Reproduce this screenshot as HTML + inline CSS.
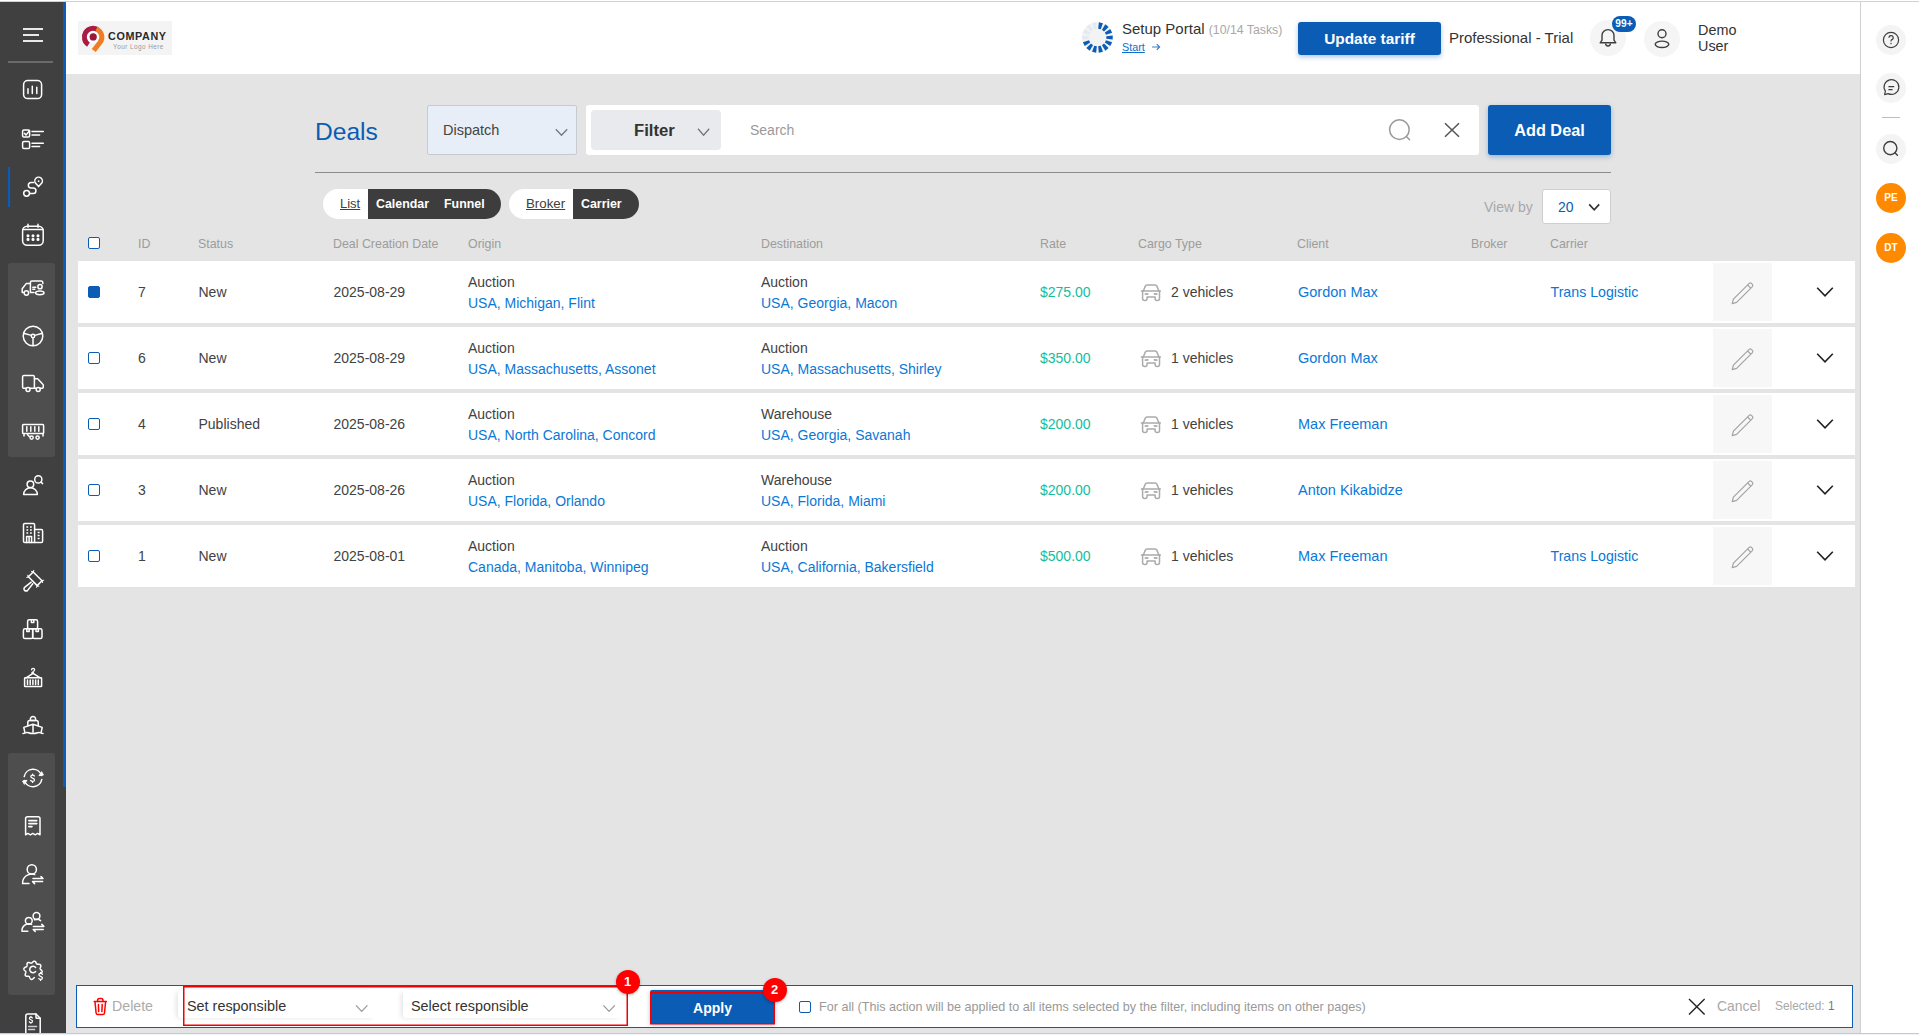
<!DOCTYPE html>
<html><head><meta charset="utf-8">
<style>
*{box-sizing:border-box;margin:0;padding:0}
html,body{width:1919px;height:1035px;overflow:hidden;background:#fff;font-family:"Liberation Sans",sans-serif;color:#333}
.abs{position:absolute}
#topline{left:0;top:1px;width:1919px;height:1px;background:#d2d2d2}
#botline{left:0;top:1033px;width:1919px;height:1px;background:#c9c9c9}
#botline2{left:0;top:1034px;width:1919px;height:1px;background:#f1f4f8}
#side{left:0;top:2px;width:66px;height:1031px;background:#404040;overflow:hidden}
#thumb{left:63px;top:0;width:3px;height:785px;background:#0a5cb8}
.grp{position:absolute;left:8px;width:47px;background:#4e4e4e;border-radius:3px}
.si{position:absolute;left:0;display:block;overflow:visible}
.si *{fill:none;stroke:#fff;stroke-width:1.5;stroke-linecap:round;stroke-linejoin:round}
.si .f{fill:#fff;stroke:none}
#header{left:66px;top:2px;width:1794px;height:72px;background:#fff}
#content{left:66px;top:74px;width:1794px;height:959px;background:#e4e4e4}
#rpanel{left:1860px;top:2px;width:59px;height:1031px;background:#fff;border-left:1px solid #d0d0d0}
.t{position:absolute;white-space:nowrap;line-height:1}
.row{position:absolute;left:12px;width:1777px;height:62px;background:#fff}
.cell{position:absolute;white-space:nowrap;font-size:14px;color:#424242}
.lnk{color:#0a78d7}
.hd{position:absolute;top:163px;font-size:12.4px;color:#9c9c9c;white-space:nowrap;line-height:14px}
.cb{position:absolute;width:12px;height:12px;border:1.5px solid #0b5cb5;border-radius:2px;background:#fff}
.cb.on{background:#0b5cb5}
.rc{position:absolute;width:32px;height:32px;border-radius:50%;background:#f4f4f4}
.rate{color:#14bd9c}
.cl{font-size:14.5px}
.cr{font-size:14.2px}

</style></head>
<body>
<div class="abs" id="side" style="top:0;height:1033px">
<div class="grp" style="top:263px;height:194px"></div>
<div class="grp" style="top:753px;height:242px"></div>
<svg class="si" width="66" height="1033" viewBox="0 0 66 1033">
<!-- hamburger -->
<path d="M23 29H43M23 35H39M23 41H43" style="stroke-width:2.2;stroke-linecap:butt;stroke:#e8e8e8"/>
<path d="M8 62H53" style="stroke:#6a6a6a;stroke-width:2;stroke-linecap:butt"/>
<!-- chart -->
<rect x="23.6" y="80.6" width="18" height="18" rx="4.2"/>
<path d="M28 88.8V93.4M32.3 86.3V93.4M36.8 87.3V93.4"/>
<!-- checklist -->
<rect x="22.6" y="130" width="7" height="7" rx="1.3"/>
<path d="M24.6 133.4L26 135L29.6 130.6"/>
<path d="M32 131.4H43.3M32 134.9H39.6"/>
<rect x="22.6" y="141.5" width="7" height="7" rx="1.3"/>
<path d="M32 143.2H43.3M32 146.4H39.6"/>
<!-- active bar -->
<path d="M9 167V207" style="stroke:#0a5cb8;stroke-width:2.2;stroke-linecap:butt"/>
<!-- route -->
<circle cx="26.6" cy="193.3" r="2.9"/>
<path d="M33.5 182.6H31A2.65 2.65 0 0 0 31 187.9H33.2A2.75 2.75 0 0 1 33.2 193.4H29.7"/>
<path d="M38.6 186.6L35.9 183.6A3.8 3.8 0 1 1 41.3 183.6Z"/>
<circle class="f" cx="38.6" cy="181.2" r="0.9"/>
<!-- calendar -->
<rect x="22.6" y="226.2" width="20.6" height="19" rx="4.5"/>
<path d="M28 224.2V227.2M38 224.2V227.2M22.8 229.6H43"/>
<g class="f"><circle cx="28" cy="235.7" r="0.8"/><circle cx="33" cy="235.7" r="0.8"/><circle cx="38" cy="235.7" r="0.8"/><circle cx="28" cy="239.4" r="0.8"/><circle cx="33" cy="239.4" r="0.8"/><circle cx="38" cy="239.4" r="0.8"/></g>
<!-- truck person -->
<path d="M34 292.4H30.4V282.6A1.5 1.5 0 0 1 31.9 281.1H41.4A1.4 1.4 0 0 1 42.8 282.5V283.6"/>
<path d="M24.2 292.6H22.2V288.8L26.2 283.6H30.4"/>
<path d="M32.8 287.3H35.8M32.8 289.3H34.8"/>
<circle cx="26.4" cy="293" r="2.2"/>
<circle cx="40" cy="286.7" r="2.1"/>
<ellipse cx="39.8" cy="292.8" rx="4.2" ry="1.9"/>
<!-- steering -->
<circle cx="33" cy="336" r="9.8"/>
<circle cx="33" cy="336" r="1.7"/>
<path d="M23.6 333.3L31.3 335.4M42.4 333.3L34.7 335.4M33 337.8V345.6"/>
<!-- truck -->
<path d="M34.4 388.3V376.8A1.3 1.3 0 0 0 33.1 375.6H23.9A1.3 1.3 0 0 0 22.6 376.8V387A1.3 1.3 0 0 0 23.9 388.3H26"/>
<path d="M34.4 378.8H37.2A1.6 1.6 0 0 1 38.4 379.4L42.8 384.2A1.8 1.8 0 0 1 43.3 385.4V387A1.3 1.3 0 0 1 42 388.3H40.3M30 388.3H36"/>
<circle cx="28" cy="389.6" r="2"/>
<circle cx="38.2" cy="389.6" r="2"/>
<!-- trailer -->
<rect x="22.6" y="424.6" width="21" height="9" rx="0.8"/>
<path d="M26.8 426.8V431.3M30.8 426.8V431.3M34.8 426.8V431.3M38.8 426.8V431.3M24 434V436M43 434V436M27.5 434.5L29.3 436.5"/>
<circle cx="31.6" cy="437.6" r="1.6"/>
<circle cx="37.6" cy="437.6" r="1.6"/>
<!-- person search -->
<circle cx="30.4" cy="484.2" r="3.3"/>
<path d="M23.6 494.6H37.4A6.9 6.9 0 0 0 23.6 494.6Z"/>
<circle cx="38.3" cy="479.4" r="3.6"/>
<path d="M40.9 482L42.6 483.6"/>
<!-- building -->
<path d="M34.6 542.6H24.8A1.3 1.3 0 0 1 23.5 541.3V524.8A1.3 1.3 0 0 1 24.8 523.5H33.3A1.3 1.3 0 0 1 34.6 524.8Z"/>
<path d="M34.6 529.6H41.3A1.3 1.3 0 0 1 42.6 530.9V541.3A1.3 1.3 0 0 1 41.3 542.6H34.6"/>
<path d="M26.6 542.6V536.4H31.6V542.6M29.1 536.4V542.6" />
<path d="M26.4 527H28.2M30 527H31.8M26.4 530H28.2M30 530H31.8M26.4 533H28.2M30 533H31.8M37.6 532.6H39.6M37.6 535.6H39.6M37.6 538.6H39.6" style="stroke-width:1.5;stroke-linecap:butt"/>
<!-- gavel -->
<path d="M33.2 572L42 580.8L37.2 585.6L28.4 576.8Z"/><path d="M31.6 571.4L33.2 572L33.8 570.4M26.8 577.4L28.4 576.8L27.8 575.2M43.6 580.2L42 580.8L42.6 582.4M36.6 587.2L37.2 585.6L38.8 586.2" style="stroke-width:1.1"/>
<path d="M31.2 582.2L24.6 587.4A2.1 2.1 0 0 0 27.6 590.4L32.8 583.8"/>
<!-- boxes -->
<rect x="27.6" y="619.8" width="10" height="9" rx="1.6"/>
<rect x="23.4" y="628.8" width="9.4" height="9.8" rx="1.6"/>
<rect x="32.6" y="628.8" width="9.4" height="9.8" rx="1.6"/>
<path d="M31.4 619.8V622.6H33.8V619.8M26.8 628.8V631.4H29.2V628.8M36 628.8V631.4H38.4V628.8"/>
<!-- container crane -->
<rect x="24.6" y="677.8" width="17" height="8.8" rx="0.6"/>
<path d="M27.5 680V684.4M30.2 680V684.4M32.9 680V684.4M35.6 680V684.4M38.3 680V684.4"/>
<path d="M26 677.8L33.1 673.4L40.2 677.8M33.1 673.4V672.4"/>
<path d="M31.6 669.8A1.5 1.5 0 1 1 33.1 671.3V672.4A1.4 1.4 0 0 1 31.7 673" style="stroke-width:1.3"/>
<!-- ship -->
<path d="M33 716.4A2.6 2.6 0 0 1 35.6 719V720.4H30.4V719A2.6 2.6 0 0 1 33 716.4Z"/>
<path d="M27.8 725.6V722.4A2 2 0 0 1 29.8 720.4H36.2A2 2 0 0 1 38.2 722.4V725.6"/>
<path d="M24.8 732.2L23.8 727.4L33 724.2L42.2 727.4L41.2 732.2M33 724.2V732.2"/>
<path d="M23 733.6C25 733.6 25.5 732.4 27 732.4C28.5 732.4 29 733.6 33 733.6C37 733.6 37.5 732.4 39 732.4C40.5 732.4 41 733.6 43 733.6"/>
<!-- dollar cycle -->
<path d="M24.2 776.6A9 9 0 0 1 41.6 775.6M41.8 779.4A9 9 0 0 1 24.4 780.4"/>
<path class="f" d="M39.4 775.6L43.4 775L41.8 772Z M26.6 780.4L22.6 781L24.2 784Z" style="stroke:#fff;stroke-width:1"/>
<path d="M34.40 776.00C34.10 775.40 33.40 775.10 32.60 775.10C31.50 775.10 30.80 775.70 30.80 776.50C30.80 777.40 31.60 777.80 32.60 778.10C33.70 778.40 34.50 778.90 34.50 779.90C34.50 780.80 33.70 781.40 32.60 781.40C31.70 781.40 31.00 781.00 30.70 780.40M32.60 774.10L32.60 775.10M32.60 781.40L32.60 782.40" style="stroke-width:1.3"/>
<!-- receipt -->
<path d="M25.6 834.8V818.8A2 2 0 0 1 27.6 816.8H38A2 2 0 0 1 40 818.8V834.8L37.6 833.4L35.2 834.8L32.8 833.4L30.4 834.8L28 833.4Z"/>
<path d="M28.8 820.6H36.8M28.8 823.6H36.8M28.8 826.6H32" style="stroke-width:1.6"/>
<!-- person transfer -->
<circle cx="31.8" cy="869.4" r="4.6"/>
<path d="M34.8 874.6A9 9 0 0 0 22.6 883.6H29"/>
<path d="M33 878.6H43L41 876.6M42.6 881.6H32.6L34.6 883.6"/>
<!-- group transfer -->
<circle cx="36.5" cy="916" r="3.4"/>
<circle cx="28.8" cy="920.8" r="3.4"/>
<path d="M31.6 924.4A6.8 6.8 0 0 0 22 931.2H27.8M34.5 919.8A6.6 6.6 0 0 1 40.6 920.6"/>
<path d="M33.4 926.4H43.8L41.8 924.4M43.2 929.4H33.2L35.2 931.4"/>
<!-- gear dollar -->
<path d="M34.29 977.59 L34.09 977.72 L33.89 977.89 L33.69 978.08 L33.48 978.30 L33.26 978.52 L33.02 978.74 L32.78 978.95 L32.52 979.13 L32.25 979.28 L31.98 979.38 L31.71 979.42 L31.45 979.42 L31.19 979.36 L30.95 979.24 L30.72 979.07 L30.51 978.86 L30.32 978.61 L30.15 978.34 L30.00 978.06 L29.86 977.77 L29.74 977.49 L29.61 977.23 L29.49 976.99 L29.35 976.79 L29.21 976.62 L29.04 976.49 L28.85 976.40 L28.63 976.34 L28.39 976.31 L28.12 976.30 L27.82 976.30 L27.51 976.30 L27.19 976.29 L26.87 976.27 L26.56 976.23 L26.26 976.16 L25.98 976.06 L25.74 975.92 L25.53 975.74 L25.37 975.53 L25.26 975.29 L25.20 975.02 L25.18 974.73 L25.21 974.43 L25.26 974.11 L25.35 973.80 L25.45 973.50 L25.56 973.21 L25.67 972.93 L25.75 972.66 L25.82 972.42 L25.85 972.19 L25.84 971.97 L25.79 971.77 L25.70 971.57 L25.56 971.37 L25.39 971.18 L25.20 970.97 L24.98 970.76 L24.76 970.54 L24.54 970.30 L24.33 970.06 L24.16 969.80 L24.01 969.53 L23.92 969.26 L23.87 968.99 L23.89 968.72 L23.95 968.47 L24.07 968.23 L24.25 968.00 L24.46 967.79 L24.71 967.61 L24.98 967.44 L25.27 967.29 L25.56 967.15 L25.84 967.03 L26.10 966.90 L26.33 966.78 L26.53 966.64 L26.69 966.49 L26.82 966.32 L26.91 966.13 L26.96 965.91 L26.99 965.66 L27.01 965.39 L27.00 965.10 L27.00 964.79 L27.01 964.47 L27.03 964.15 L27.07 963.83 L27.15 963.53 L27.25 963.26 L27.40 963.02 L27.58 962.82 L27.79 962.66 L28.03 962.56 L28.31 962.50 L28.60 962.48 L28.90 962.51 L29.21 962.57 L29.52 962.66 L29.83 962.76 L30.12 962.87 L30.40 962.97 L30.66 963.06 L30.90 963.12 L31.13 963.15 L31.35 963.14 L31.55 963.08 L31.75 962.99 L31.94 962.85 L32.14 962.68 L32.34 962.48 L32.56 962.26 L32.78 962.04 L33.02 961.82 L33.27 961.62 L33.52 961.44 L33.79 961.30 L34.06 961.21 L34.33 961.17 L34.60 961.19 L34.85 961.26 L35.09 961.39 L35.32 961.56 L35.52 961.78 L35.71 962.03 L35.87 962.31 L36.02 962.59 L36.16 962.88 L36.28 963.16 L36.41 963.42 L36.53 963.65 L36.67 963.84 L36.82 964.00 L36.99 964.13 L37.19 964.21 L37.41 964.27 L37.66 964.30 L37.93 964.31 L38.23 964.30 L38.54 964.30 L38.86 964.31 L39.18 964.33 L39.50 964.38 L39.79 964.45 L40.06 964.56 L40.30 964.71 L40.50 964.89 L40.65 965.11 L40.75 965.36 L40.81 965.63 L40.82 965.92 L40.79 966.23 L40.72 966.54 L40.63 966.85 L40.53 967.15 L40.42 967.44 L40.32 967.72 L40.23 967.98 L40.18 968.22 L40.15 968.45 L40.17 968.66 L40.22 968.87 L40.32 969.06 L40.46 969.26 L40.64 969.46 L40.84 969.66 L41.06 969.87 L41.28 970.10 L41.50 970.34 L41.70 970.59 L41.87 970.85 L42.01 971.11 L42.09 971.39 L42.13 971.66 L42.11 971.92 L42.03 972.17 L41.90 972.41 L41.72 972.64"/>
<path d="M35.6 967.4A3.3 3.3 0 1 0 35.6 971.6"/>
<path d="M42.31 974.31C42.02 973.74 41.36 973.45 40.60 973.45C39.55 973.45 38.89 974.02 38.89 974.78C38.89 975.64 39.65 976.02 40.60 976.30C41.65 976.59 42.41 977.06 42.41 978.01C42.41 978.87 41.65 979.44 40.60 979.44C39.75 979.44 39.08 979.06 38.80 978.49M40.60 972.50L40.60 973.45M40.60 979.44L40.60 980.39" style="stroke-width:1.3"/>
<!-- invoice -->
<path d="M25.8 1034V1016A2 2 0 0 1 27.8 1014H36L40.2 1018.2V1034"/>
<path d="M36 1014V1017.4A0.8 0.8 0 0 0 36.8 1018.2H40.2"/>
<path d="M32.43 1017.93C32.17 1017.42 31.58 1017.16 30.90 1017.16C29.96 1017.16 29.37 1017.67 29.37 1018.35C29.37 1019.12 30.05 1019.46 30.90 1019.71C31.83 1019.97 32.52 1020.39 32.52 1021.25C32.52 1022.01 31.83 1022.52 30.90 1022.52C30.13 1022.52 29.54 1022.18 29.29 1021.67M30.90 1016.31L30.90 1017.16M30.90 1022.52L30.90 1023.37" style="stroke-width:1.2"/>
<path d="M28.6 1026.4H36.6M28.6 1029.4H34.6" style="stroke:#ccc"/>
</svg>
<div style="position:absolute;left:63px;top:2px;width:3px;height:785px;background:#0a5cb8"></div>
</div>

<div class="abs" id="header"></div>
<!-- logo -->
<div class="abs" style="left:78px;top:21px;width:94px;height:34px;background:#f4f4f4"></div>
<svg class="abs" style="left:78px;top:21px" width="94" height="34" viewBox="78 21 94 34">
<circle cx="93.2" cy="36.9" r="6.3" fill="#fff"/>
<path d="M88.46 44.52A8.75 8.75 0 0 1 97.47 29.52" fill="none" stroke="#a91b43" stroke-width="5"/>
<path d="M96.38 28.99A8.75 8.75 0 0 1 100.00 42.49L93.72 50.52" fill="none" stroke="#f07d22" stroke-width="5"/>
<circle cx="93.2" cy="36.9" r="3.6" fill="#9a1838"/>
<text x="108" y="39.8" style="font:bold 10.8px 'Liberation Sans';fill:#2a2a2a;letter-spacing:0.6px">COMPANY</text>
<text x="113" y="48.6" style="font:6.4px 'Liberation Sans';fill:#9a9a9a;letter-spacing:0.45px">Your Logo Here</text>
</svg>
<!-- spinner -->
<svg class="abs" style="left:1081px;top:21px" width="33" height="33" viewBox="-16.5 -16.5 33 33">
<circle r="15.6" fill="#f3f3f3"/>
<g id="ticks"><path d="M3.23 -8.29 L5.43 -14.35 L1.34 -15.29 L0.69 -8.87Z" fill="#0b5cb5"/><path d="M6.50 -6.07 L11.12 -10.57 L7.84 -13.19 L4.47 -7.69Z" fill="#0b5cb5"/><path d="M8.49 -2.65 L14.61 -4.70 L12.78 -8.49 L7.36 -4.99Z" fill="#0b5cb5"/><path d="M8.80 1.30 L15.20 2.10 L15.20 -2.10 L8.80 -1.30Z" fill="#0b5cb5"/><path d="M7.36 4.99 L12.78 8.49 L14.61 4.70 L8.49 2.65Z" fill="#0b5cb5"/><path d="M4.47 7.69 L7.83 13.19 L11.12 10.57 L6.50 6.07Z" fill="#0b5cb5"/><path d="M0.69 8.87 L1.33 15.29 L5.43 14.35 L3.23 8.29Z" fill="#0b5cb5"/><path d="M-3.23 8.29 L-5.43 14.35 L-1.34 15.29 L-0.69 8.87Z" fill="#0b5cb5"/><path d="M-6.50 6.07 L-11.12 10.57 L-7.84 13.19 L-4.47 7.69Z" fill="#0b5cb5"/><path d="M-8.49 2.65 L-14.61 4.70 L-12.78 8.49 L-7.36 4.99Z" fill="#0b5cb5"/><path d="M-8.80 -1.30 L-15.20 -2.10 L-15.20 2.10 L-8.80 1.30Z" fill="#e3eaf2"/><path d="M-7.36 -4.99 L-12.78 -8.49 L-14.61 -4.70 L-8.49 -2.65Z" fill="#e3eaf2"/><path d="M-4.47 -7.69 L-7.84 -13.19 L-11.12 -10.57 L-6.50 -6.07Z" fill="#e3eaf2"/><path d="M-0.69 -8.87 L-1.34 -15.29 L-5.43 -14.35 L-3.23 -8.29Z" fill="#e3eaf2"/></g>
</svg>
<div class="t" style="left:1122px;top:20px;font-size:15px;line-height:17px;color:#333">Setup Portal <span style="font-size:12.3px;color:#a8a8a8">(10/14 Tasks)</span></div>
<div class="t" style="left:1122px;top:41px;font-size:10.8px;line-height:12px;color:#0a6fcf;text-decoration:underline">Start</div>
<svg class="abs" style="left:1150px;top:42px" width="12" height="10" viewBox="0 0 12 10"><path d="M2 5H9.6M6.8 2.2L9.6 5L6.8 7.8" fill="none" stroke="#3a7fd0" stroke-width="1.2"/></svg>
<!-- update tariff -->
<div class="abs" style="left:1298px;top:22px;width:143px;height:33px;background:#0b5cb5;border-radius:3px;box-shadow:0 2px 5px rgba(11,92,181,0.35)"></div>
<div class="t" style="left:1298px;top:22px;width:143px;height:33px;line-height:33px;text-align:center;color:#fff;font-weight:bold;font-size:15.4px">Update tariff</div>
<div class="t" style="left:1449px;top:29px;font-size:15px;line-height:17px;color:#333">Professional - Trial</div>
<!-- bell -->
<div class="abs" style="left:1590px;top:20px;width:36px;height:36px;border-radius:50%;background:#f5f5f5"></div>
<svg class="abs" style="left:1590px;top:20px" width="36" height="36" viewBox="1590 20 36 36">
<path d="M1600.2 42.8H1615.8L1614 40.2V35.6A6 6 0 0 0 1602 35.6V40.2Z" fill="none" stroke="#3f3f3f" stroke-width="1.4" stroke-linejoin="round"/>
<path d="M1605.6 43.6A2.4 2.4 0 0 0 1610.4 43.6" fill="none" stroke="#3f3f3f" stroke-width="1.4"/>
</svg>
<div class="t" style="left:1612px;top:16px;width:24px;height:16px;border-radius:8px;background:#0b5cb5;color:#fff;font-weight:bold;font-size:10.2px;line-height:16px;text-align:center">99+</div>
<!-- user -->
<div class="abs" style="left:1644px;top:21px;width:36px;height:36px;border-radius:50%;background:#f5f5f5"></div>
<svg class="abs" style="left:1644px;top:21px" width="36" height="36" viewBox="1644 21 36 36">
<circle cx="1662" cy="33.8" r="4" fill="none" stroke="#3f3f3f" stroke-width="1.4"/>
<ellipse cx="1662" cy="44.3" rx="6.8" ry="3.2" fill="none" stroke="#3f3f3f" stroke-width="1.4"/>
</svg>
<div class="t" style="left:1698px;top:22px;font-size:14.4px;line-height:16.4px;color:#333">Demo<br>User</div>

<div class="abs" id="content"></div>
<div class="t" style="left:315px;top:118.5px;font-size:24.6px;line-height:26px;color:#0b5cb5">Deals</div>
<!-- dispatch -->
<div class="abs" style="left:427px;top:105px;width:150px;height:50px;background:#e8eef8;border:1px solid #c6cad1;border-radius:2px"></div>
<div class="t" style="left:443px;top:122px;font-size:14.5px;line-height:17px;color:#444">Dispatch</div>
<svg class="abs" style="left:550px;top:120px" width="24" height="20" viewBox="550 120 24 20"><path d="M555.8 129.2L561.5 135.2L567.2 129.2" fill="none" stroke="#777" stroke-width="1.3"/></svg>
<!-- filter/search -->
<div class="abs" style="left:586px;top:105px;width:893px;height:50px;background:#fff;border-radius:3px"></div>
<div class="abs" style="left:591px;top:110px;width:130px;height:40px;background:#e8eaed;border-radius:4px"></div>
<div class="t" style="left:634px;top:121px;font-size:16.7px;line-height:19px;font-weight:bold;color:#333">Filter</div>
<svg class="abs" style="left:690px;top:120px" width="24" height="20" viewBox="690 120 24 20"><path d="M698 128.8L703.6 135.2L709.2 128.8" fill="none" stroke="#777" stroke-width="1.3"/></svg>
<div class="t" style="left:750px;top:122px;font-size:14px;line-height:17px;color:#9a9a9a">Search</div>
<svg class="abs" style="left:1380px;top:110px" width="90" height="40" viewBox="1380 110 90 40">
<circle cx="1399.4" cy="129.6" r="9.8" fill="none" stroke="#999" stroke-width="1.5"/>
<path d="M1406.6 136.8L1409.6 139.8" stroke="#999" stroke-width="1.5" stroke-linecap="round"/>
<path d="M1445 123.2L1459 136.8M1459 123.2L1445 136.8" stroke="#555" stroke-width="1.5"/>
</svg>
<!-- add deal -->
<div class="abs" style="left:1488px;top:105px;width:123px;height:50px;background:#0b5cb5;border-radius:3px;box-shadow:0 2px 5px rgba(11,92,181,0.35)"></div>
<div class="t" style="left:1488px;top:105px;width:123px;height:50px;line-height:50px;text-align:center;color:#fff;font-weight:bold;font-size:16.3px">Add Deal</div>
<!-- divider -->
<div class="abs" style="left:315px;top:172px;width:1296px;height:1px;background:#8c8c8c"></div>
<!-- pills -->
<div class="abs" style="left:323px;top:189px;width:178px;height:30px;border-radius:15px;background:#fff"></div><div class="abs" style="left:368px;top:189px;width:133px;height:30px;border-radius:0 15px 15px 0;background:#3d3d3d"></div>
<div class="t" style="left:340px;top:196px;font-size:13px;line-height:15px;color:#404040;text-decoration:underline">List</div>
<div class="t" style="left:376px;top:197px;font-size:12.4px;line-height:15px;color:#fff;font-weight:bold">Calendar</div>
<div class="t" style="left:444px;top:197px;font-size:12.4px;line-height:15px;color:#fff;font-weight:bold">Funnel</div>
<div class="abs" style="left:509px;top:189px;width:130px;height:30px;border-radius:15px;background:#fff"></div><div class="abs" style="left:573px;top:189px;width:66px;height:30px;border-radius:0 15px 15px 0;background:#3d3d3d"></div>
<div class="t" style="left:526px;top:196px;font-size:13.3px;line-height:15px;color:#404040;text-decoration:underline">Broker</div>
<div class="t" style="left:581px;top:197px;font-size:12.4px;line-height:15px;color:#fff;font-weight:bold">Carrier</div>
<!-- view by -->
<div class="t" style="left:1484px;top:199px;font-size:14px;line-height:16px;color:#a8a8a8">View by</div>
<div class="abs" style="left:1542px;top:189px;width:69px;height:35px;background:#fff;border:1px solid #cfcfcf;border-radius:3px"></div>
<div class="t" style="left:1558px;top:199px;font-size:14px;line-height:16px;color:#0b5cb5">20</div>
<svg class="abs" style="left:1582px;top:198px" width="24" height="20" viewBox="1582 198 24 20"><path d="M1589.2 204.4L1594.2 209.8L1599.2 204.4" fill="none" stroke="#333" stroke-width="1.7"/></svg>
<!-- table header -->
<div class="cb" style="left:88px;top:237px"></div>
<div class="hd" style="left:138px;top:237px">ID</div>
<div class="hd" style="left:198px;top:237px">Status</div>
<div class="hd" style="left:333px;top:237px">Deal Creation Date</div>
<div class="hd" style="left:468px;top:237px">Origin</div>
<div class="hd" style="left:761px;top:237px">Destination</div>
<div class="hd" style="left:1040px;top:237px">Rate</div>
<div class="hd" style="left:1138px;top:237px">Cargo Type</div>
<div class="hd" style="left:1297px;top:237px">Client</div>
<div class="hd" style="left:1471px;top:237px">Broker</div>
<div class="hd" style="left:1550px;top:237px">Carrier</div>
<div class="abs" style="left:78px;top:261px;width:1777px;height:62px;background:#fff"></div>
<div class="cb on" style="left:88px;top:286px"></div>
<div class="cell" style="left:138px;top:284px">7</div>
<div class="cell" style="left:198.5px;top:284px">New</div>
<div class="cell" style="left:333.5px;top:284px">2025-08-29</div>
<div class="cell rate" style="left:1040px;top:284px">$275.00</div>
<div class="cell" style="left:1171px;top:284px">2 vehicles</div>
<div class="cell lnk cl" style="left:1298px;top:284px">Gordon Max</div>
<div class="cell lnk cr" style="left:1550.5px;top:284px">Trans Logistic</div>
<div class="cell" style="left:468px;top:274px">Auction</div>
<div class="cell lnk" style="left:468px;top:295px">USA, Michigan, Flint</div>
<div class="cell" style="left:761px;top:274px">Auction</div>
<div class="cell lnk" style="left:761px;top:295px">USA, Georgia, Macon</div>
<svg class="abs" style="left:1140px;top:283px" width="22" height="20" viewBox="0 0 22 20"><g fill="none" stroke="#ababab" stroke-width="1.5" stroke-linejoin="round" stroke-linecap="round"><path d="M3.3 8L5.3 3.1A1.8 1.8 0 0 1 7 2H15.2A1.8 1.8 0 0 1 16.9 3.1L18.9 8"/><path d="M1.4 8H20.4"/><path d="M2.6 8V15.6A2 2 0 0 0 4.6 17.6H5.1A2 2 0 0 0 7.1 15.6V13.9H15.1V15.6A2 2 0 0 0 17.1 17.6H17.5A2 2 0 0 0 19.5 15.6V8"/><path d="M5.4 11.2L7.8 10.8M14.4 10.8L16.8 11.2" stroke-width="1.7"/></g></svg>
<div class="abs" style="left:1713px;top:263px;width:59px;height:58px;background:#f7f7f7"></div>
<svg class="abs" style="left:1728px;top:279px" width="28" height="26" viewBox="0 0 28 26"><g fill="none" stroke="#a3a3a3" stroke-width="1.2" stroke-linejoin="round"><path d="M4.2 24.6L5.4 20.2L21.2 4.4A1.6 1.6 0 0 1 23.4 4.4L24.4 5.4A1.6 1.6 0 0 1 24.4 7.6L8.6 23.4Z"/><path d="M19.6 6L22.8 9.2"/></g></svg>
<svg class="abs" style="left:1812px;top:283px" width="26" height="18" viewBox="0 0 26 18"><path d="M5.2 4.8L13 12.8L20.8 4.8" fill="none" stroke="#222" stroke-width="1.6"/></svg>
<div class="abs" style="left:78px;top:327px;width:1777px;height:62px;background:#fff"></div>
<div class="cb" style="left:88px;top:352px"></div>
<div class="cell" style="left:138px;top:350px">6</div>
<div class="cell" style="left:198.5px;top:350px">New</div>
<div class="cell" style="left:333.5px;top:350px">2025-08-29</div>
<div class="cell rate" style="left:1040px;top:350px">$350.00</div>
<div class="cell" style="left:1171px;top:350px">1 vehicles</div>
<div class="cell lnk cl" style="left:1298px;top:350px">Gordon Max</div>
<div class="cell" style="left:468px;top:340px">Auction</div>
<div class="cell lnk" style="left:468px;top:361px">USA, Massachusetts, Assonet</div>
<div class="cell" style="left:761px;top:340px">Auction</div>
<div class="cell lnk" style="left:761px;top:361px">USA, Massachusetts, Shirley</div>
<svg class="abs" style="left:1140px;top:349px" width="22" height="20" viewBox="0 0 22 20"><g fill="none" stroke="#ababab" stroke-width="1.5" stroke-linejoin="round" stroke-linecap="round"><path d="M3.3 8L5.3 3.1A1.8 1.8 0 0 1 7 2H15.2A1.8 1.8 0 0 1 16.9 3.1L18.9 8"/><path d="M1.4 8H20.4"/><path d="M2.6 8V15.6A2 2 0 0 0 4.6 17.6H5.1A2 2 0 0 0 7.1 15.6V13.9H15.1V15.6A2 2 0 0 0 17.1 17.6H17.5A2 2 0 0 0 19.5 15.6V8"/><path d="M5.4 11.2L7.8 10.8M14.4 10.8L16.8 11.2" stroke-width="1.7"/></g></svg>
<div class="abs" style="left:1713px;top:329px;width:59px;height:58px;background:#f7f7f7"></div>
<svg class="abs" style="left:1728px;top:345px" width="28" height="26" viewBox="0 0 28 26"><g fill="none" stroke="#a3a3a3" stroke-width="1.2" stroke-linejoin="round"><path d="M4.2 24.6L5.4 20.2L21.2 4.4A1.6 1.6 0 0 1 23.4 4.4L24.4 5.4A1.6 1.6 0 0 1 24.4 7.6L8.6 23.4Z"/><path d="M19.6 6L22.8 9.2"/></g></svg>
<svg class="abs" style="left:1812px;top:349px" width="26" height="18" viewBox="0 0 26 18"><path d="M5.2 4.8L13 12.8L20.8 4.8" fill="none" stroke="#222" stroke-width="1.6"/></svg>
<div class="abs" style="left:78px;top:393px;width:1777px;height:62px;background:#fff"></div>
<div class="cb" style="left:88px;top:418px"></div>
<div class="cell" style="left:138px;top:416px">4</div>
<div class="cell" style="left:198.5px;top:416px">Published</div>
<div class="cell" style="left:333.5px;top:416px">2025-08-26</div>
<div class="cell rate" style="left:1040px;top:416px">$200.00</div>
<div class="cell" style="left:1171px;top:416px">1 vehicles</div>
<div class="cell lnk cl" style="left:1298px;top:416px">Max Freeman</div>
<div class="cell" style="left:468px;top:406px">Auction</div>
<div class="cell lnk" style="left:468px;top:427px">USA, North Carolina, Concord</div>
<div class="cell" style="left:761px;top:406px">Warehouse</div>
<div class="cell lnk" style="left:761px;top:427px">USA, Georgia, Savanah</div>
<svg class="abs" style="left:1140px;top:415px" width="22" height="20" viewBox="0 0 22 20"><g fill="none" stroke="#ababab" stroke-width="1.5" stroke-linejoin="round" stroke-linecap="round"><path d="M3.3 8L5.3 3.1A1.8 1.8 0 0 1 7 2H15.2A1.8 1.8 0 0 1 16.9 3.1L18.9 8"/><path d="M1.4 8H20.4"/><path d="M2.6 8V15.6A2 2 0 0 0 4.6 17.6H5.1A2 2 0 0 0 7.1 15.6V13.9H15.1V15.6A2 2 0 0 0 17.1 17.6H17.5A2 2 0 0 0 19.5 15.6V8"/><path d="M5.4 11.2L7.8 10.8M14.4 10.8L16.8 11.2" stroke-width="1.7"/></g></svg>
<div class="abs" style="left:1713px;top:395px;width:59px;height:58px;background:#f7f7f7"></div>
<svg class="abs" style="left:1728px;top:411px" width="28" height="26" viewBox="0 0 28 26"><g fill="none" stroke="#a3a3a3" stroke-width="1.2" stroke-linejoin="round"><path d="M4.2 24.6L5.4 20.2L21.2 4.4A1.6 1.6 0 0 1 23.4 4.4L24.4 5.4A1.6 1.6 0 0 1 24.4 7.6L8.6 23.4Z"/><path d="M19.6 6L22.8 9.2"/></g></svg>
<svg class="abs" style="left:1812px;top:415px" width="26" height="18" viewBox="0 0 26 18"><path d="M5.2 4.8L13 12.8L20.8 4.8" fill="none" stroke="#222" stroke-width="1.6"/></svg>
<div class="abs" style="left:78px;top:459px;width:1777px;height:62px;background:#fff"></div>
<div class="cb" style="left:88px;top:484px"></div>
<div class="cell" style="left:138px;top:482px">3</div>
<div class="cell" style="left:198.5px;top:482px">New</div>
<div class="cell" style="left:333.5px;top:482px">2025-08-26</div>
<div class="cell rate" style="left:1040px;top:482px">$200.00</div>
<div class="cell" style="left:1171px;top:482px">1 vehicles</div>
<div class="cell lnk cl" style="left:1298px;top:482px">Anton Kikabidze</div>
<div class="cell" style="left:468px;top:472px">Auction</div>
<div class="cell lnk" style="left:468px;top:493px">USA, Florida, Orlando</div>
<div class="cell" style="left:761px;top:472px">Warehouse</div>
<div class="cell lnk" style="left:761px;top:493px">USA, Florida, Miami</div>
<svg class="abs" style="left:1140px;top:481px" width="22" height="20" viewBox="0 0 22 20"><g fill="none" stroke="#ababab" stroke-width="1.5" stroke-linejoin="round" stroke-linecap="round"><path d="M3.3 8L5.3 3.1A1.8 1.8 0 0 1 7 2H15.2A1.8 1.8 0 0 1 16.9 3.1L18.9 8"/><path d="M1.4 8H20.4"/><path d="M2.6 8V15.6A2 2 0 0 0 4.6 17.6H5.1A2 2 0 0 0 7.1 15.6V13.9H15.1V15.6A2 2 0 0 0 17.1 17.6H17.5A2 2 0 0 0 19.5 15.6V8"/><path d="M5.4 11.2L7.8 10.8M14.4 10.8L16.8 11.2" stroke-width="1.7"/></g></svg>
<div class="abs" style="left:1713px;top:461px;width:59px;height:58px;background:#f7f7f7"></div>
<svg class="abs" style="left:1728px;top:477px" width="28" height="26" viewBox="0 0 28 26"><g fill="none" stroke="#a3a3a3" stroke-width="1.2" stroke-linejoin="round"><path d="M4.2 24.6L5.4 20.2L21.2 4.4A1.6 1.6 0 0 1 23.4 4.4L24.4 5.4A1.6 1.6 0 0 1 24.4 7.6L8.6 23.4Z"/><path d="M19.6 6L22.8 9.2"/></g></svg>
<svg class="abs" style="left:1812px;top:481px" width="26" height="18" viewBox="0 0 26 18"><path d="M5.2 4.8L13 12.8L20.8 4.8" fill="none" stroke="#222" stroke-width="1.6"/></svg>
<div class="abs" style="left:78px;top:525px;width:1777px;height:62px;background:#fff"></div>
<div class="cb" style="left:88px;top:550px"></div>
<div class="cell" style="left:138px;top:548px">1</div>
<div class="cell" style="left:198.5px;top:548px">New</div>
<div class="cell" style="left:333.5px;top:548px">2025-08-01</div>
<div class="cell rate" style="left:1040px;top:548px">$500.00</div>
<div class="cell" style="left:1171px;top:548px">1 vehicles</div>
<div class="cell lnk cl" style="left:1298px;top:548px">Max Freeman</div>
<div class="cell lnk cr" style="left:1550.5px;top:548px">Trans Logistic</div>
<div class="cell" style="left:468px;top:538px">Auction</div>
<div class="cell lnk" style="left:468px;top:559px">Canada, Manitoba, Winnipeg</div>
<div class="cell" style="left:761px;top:538px">Auction</div>
<div class="cell lnk" style="left:761px;top:559px">USA, California, Bakersfield</div>
<svg class="abs" style="left:1140px;top:547px" width="22" height="20" viewBox="0 0 22 20"><g fill="none" stroke="#ababab" stroke-width="1.5" stroke-linejoin="round" stroke-linecap="round"><path d="M3.3 8L5.3 3.1A1.8 1.8 0 0 1 7 2H15.2A1.8 1.8 0 0 1 16.9 3.1L18.9 8"/><path d="M1.4 8H20.4"/><path d="M2.6 8V15.6A2 2 0 0 0 4.6 17.6H5.1A2 2 0 0 0 7.1 15.6V13.9H15.1V15.6A2 2 0 0 0 17.1 17.6H17.5A2 2 0 0 0 19.5 15.6V8"/><path d="M5.4 11.2L7.8 10.8M14.4 10.8L16.8 11.2" stroke-width="1.7"/></g></svg>
<div class="abs" style="left:1713px;top:527px;width:59px;height:58px;background:#f7f7f7"></div>
<svg class="abs" style="left:1728px;top:543px" width="28" height="26" viewBox="0 0 28 26"><g fill="none" stroke="#a3a3a3" stroke-width="1.2" stroke-linejoin="round"><path d="M4.2 24.6L5.4 20.2L21.2 4.4A1.6 1.6 0 0 1 23.4 4.4L24.4 5.4A1.6 1.6 0 0 1 24.4 7.6L8.6 23.4Z"/><path d="M19.6 6L22.8 9.2"/></g></svg>
<svg class="abs" style="left:1812px;top:547px" width="26" height="18" viewBox="0 0 26 18"><path d="M5.2 4.8L13 12.8L20.8 4.8" fill="none" stroke="#222" stroke-width="1.6"/></svg>

<div class="abs" id="rpanel"></div>
<div class="rc" style="left:1876px;top:25px;width:30px;height:30px"></div>
<div class="rc" style="left:1876px;top:73px;width:30px;height:30px"></div>
<div class="abs" style="left:1882px;top:117px;width:18px;height:1px;background:#bdbdbd"></div>
<div class="rc" style="left:1876px;top:134px;width:30px;height:30px"></div>
<svg class="abs" style="left:1860px;top:0" width="59" height="180" viewBox="1860 0 59 180">
<g fill="none" stroke="#3f3f3f" stroke-width="1.2">
<circle cx="1891" cy="40" r="7.6"/>
<path d="M1889 37.8A2.1 2.1 0 1 1 1891.5 39.8C1891 40.1 1891 40.6 1891 41.4"/>
<path d="M1884.6 94.6L1885.4 91.2A7.4 7.4 0 1 1 1888.2 93.6Z" stroke-linejoin="round"/>
<path d="M1888.4 86.6H1894.2M1888.4 89.6H1892.6"/>
<circle cx="1890.3" cy="148.1" r="6.6" stroke-width="1.4"/>
<path d="M1895 152.8L1897.4 155.2" stroke-width="1.4" stroke-linecap="round"/>
</g>
<circle cx="1891" cy="43.6" r="0.75" fill="#3f3f3f"/>
</svg>
<div class="t" style="left:1876px;top:183px;width:30px;height:30px;border-radius:50%;background:#ff8a00;color:#fff;font-weight:bold;font-size:10px;line-height:30px;text-align:center">PE</div>
<div class="t" style="left:1876px;top:233px;width:30px;height:30px;border-radius:50%;background:#ff8a00;color:#fff;font-weight:bold;font-size:10px;line-height:30px;text-align:center">DT</div>

<div class="abs" style="left:76px;top:985px;width:1777px;height:43px;background:#fff;border:1px solid #0b5cb5"></div>
<svg class="abs" style="left:90px;top:995px" width="20" height="22" viewBox="90 995 20 22">
<g fill="none" stroke="#ff0000" stroke-width="1.5" stroke-linejoin="round" stroke-linecap="round">
<path d="M94.2 1001.6H106.4"/>
<path d="M97.6 1001.4V1000.4A1.8 1.8 0 0 1 99.4 998.6H101.2A1.8 1.8 0 0 1 103 1000.4V1001.4"/>
<path d="M95 1001.8L96.1 1013A1.8 1.8 0 0 0 97.9 1014.6H102.7A1.8 1.8 0 0 0 104.5 1013L105.6 1001.8"/>
<path d="M98.4 1004.4L98.7 1011.6M102.2 1004.4L101.9 1011.6"/>
</g></svg>
<div class="t" style="left:112px;top:998px;font-size:14.2px;line-height:16px;color:#ababab">Delete</div>
<!-- selects -->
<div class="abs" style="left:178px;top:990px;width:199px;height:28px;background:#fff;border-radius:3px;box-shadow:-3px 1px 5px -1px rgba(0,0,0,0.10)"></div>
<div class="abs" style="left:403px;top:990px;width:219px;height:28px;background:#fff;border-radius:3px;box-shadow:-3px 1px 5px -1px rgba(0,0,0,0.10)"></div>
<svg class="abs" style="left:180px;top:983px" width="600" height="46" viewBox="180 983 600 46"><rect x="183.75" y="986.75" width="443.5" height="38.5" fill="none" stroke="#f00000" stroke-width="1.5"/></svg>
<div class="t" style="left:187px;top:998px;font-size:14.4px;line-height:16px;color:#333">Set responsible</div>
<div class="t" style="left:411px;top:998px;font-size:14.4px;line-height:16px;color:#333">Select responsible</div>
<svg class="abs" style="left:350px;top:1000px" width="280" height="16" viewBox="350 1000 280 16">
<path d="M356 1005.4L361.7 1011.4L367.4 1005.4M603.4 1005.4L609.1 1011.4L614.8 1005.4" fill="none" stroke="#9a9a9a" stroke-width="1.3"/>
</svg>
<!-- apply -->
<div class="abs" style="left:650px;top:990px;width:125px;height:34px;background:#0b5cb5;border-radius:2px;box-shadow:0 1px 4px rgba(11,92,181,0.35)"></div>
<svg class="abs" style="left:645px;top:985px" width="140" height="45" viewBox="645 985 140 45"><rect x="650.75" y="992.75" width="123.5" height="31" fill="none" stroke="#f00000" stroke-width="1.5"/></svg>
<div class="t" style="left:650px;top:1000px;width:125px;text-align:center;font-size:14px;line-height:16px;color:#fff;font-weight:bold">Apply</div>
<div class="t" style="left:615.5px;top:969.5px;width:24px;height:24px;border-radius:50%;background:#ff0000;color:#fff;font-weight:bold;font-size:13px;line-height:24px;text-align:center;box-shadow:0 1px 3px rgba(0,0,0,0.3)">1</div>
<div class="t" style="left:762.5px;top:977.5px;width:24px;height:24px;border-radius:50%;background:#ff0000;color:#fff;font-weight:bold;font-size:13px;line-height:24px;text-align:center;box-shadow:0 1px 3px rgba(0,0,0,0.3)">2</div>
<div class="cb" style="left:799px;top:1001px"></div>
<div class="t" style="left:819px;top:1000px;font-size:12.6px;line-height:15px;color:#999">For all (This action will be applied to all items selected by the filter, including items on other pages)</div>
<svg class="abs" style="left:1686px;top:997px" width="22" height="20" viewBox="1686 997 22 20"><path d="M1689 999L1704.6 1014.4M1704.6 999L1689 1014.4" stroke="#222" stroke-width="1.4"/></svg>
<div class="t" style="left:1717px;top:998px;font-size:13.9px;line-height:16px;color:#a8a8a8">Cancel</div>
<div class="t" style="left:1775px;top:999px;font-size:11.9px;line-height:14px;color:#a8a8a8">Selected: <span style="color:#777">1</span></div>

<div class="abs" style="left:0;top:0;width:1919px;height:1px;background:#fff"></div>
<div class="abs" id="topline"></div>
<div class="abs" id="botline"></div>
<div class="abs" id="botline2"></div>
</body></html>
